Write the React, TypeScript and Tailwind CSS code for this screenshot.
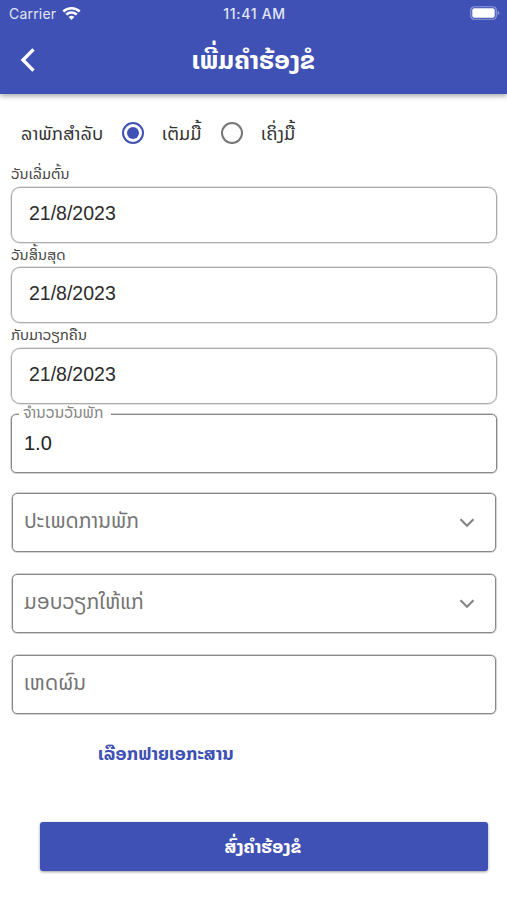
import { useState } from 'react';
import clsx from 'clsx';

const dateFields = [
  { label: 'ວັນເລີ່ມຕົ້ນ', value: '21/8/2023' },
  { label: 'ວັນສິ້ນສຸດ', value: '21/8/2023' },
  { label: 'ກັບມາວຽກຄືນ', value: '21/8/2023' },
];

function StatusBar() {
  return (
    <div className="grid h-[27px] grid-cols-3 items-center pl-[9px] pr-[7px] text-[14px] leading-none text-[#e3e6f7]">
      <div className="flex items-center gap-[6px]">
        <span className="tracking-[0.2px]">Carrier</span>
        <svg className="-mt-[1px]" width="19" height="15" viewBox="0 0 19 15" fill="none" stroke="#fff" strokeWidth="2.5">
          <path d="M1.3 5.5a11.8 11.8 0 0 1 16.4 0" />
          <path d="M4.3 8.7a7.5 7.5 0 0 1 10.4 0" />
          <path d="M9.5 14 6.6 11.1a4.2 4.2 0 0 1 5.8 0z" fill="#fff" stroke="none" />
        </svg>
      </div>
      <span className="text-center font-medium tracking-[0.7px]">11:41 AM</span>
      <svg className="-mt-[1px] justify-self-end" width="30" height="14" viewBox="0 0 30 14">
        <rect x="0.75" y="0.75" width="25.5" height="12.5" rx="3.5" fill="none" stroke="#919bd8" strokeWidth="1.2" />
        <rect x="2.3" y="2.3" width="22.4" height="9.4" rx="2" fill="#fff" />
        <path d="M27.6 4.8c2.3.7 2.3 3.7 0 4.4z" fill="#919bd8" />
      </svg>
    </div>
  );
}

function Header() {
  return (
    <header className="h-[94px] bg-[#3f51b5] shadow-[0_2px_5px_rgba(0,0,0,0.35)]">
      <StatusBar />
      <div className="grid h-[67px] grid-cols-[60px_1fr_60px] items-center">
        <button type="button" aria-label="Back" className="-mt-[2px] pl-[20px]">
          <svg width="16" height="24" viewBox="0 0 16 24" fill="none" stroke="#fff" strokeWidth="3.4">
            <path d="M13.5 1.4 3 12l10.5 10.6" />
          </svg>
        </button>
        <h1 className="-mt-[2px] text-center text-[25.6px] font-bold leading-none whitespace-nowrap text-white">
          ເພີ່ມຄຳຮ້ອງຂໍ
        </h1>
      </div>
    </header>
  );
}

function Radio({ checked, onClick, label }: { checked: boolean; onClick: () => void; label: string }) {
  return (
    <button
      type="button"
      role="radio"
      aria-checked={checked}
      aria-label={label}
      onClick={onClick}
      className={clsx(
        'flex size-[22px] shrink-0 items-center justify-center rounded-full border-2',
        checked ? 'border-[#3f51b5]' : 'border-[#777]',
      )}
    >
      {checked && <span className="size-[12px] rounded-full bg-[#3f51b5]" />}
    </button>
  );
}

function SelectField({ label, chevron = true }: { label: string; chevron?: boolean }) {
  return (
    <div className="mx-px flex h-[59px] items-center justify-between rounded-[5px] border border-[#888] pr-[20px] pb-[3px] pl-[11px] text-[20.8px] leading-none text-[#757575] shadow-[0_0_0_0.5px_#aaa]">
      <span className="whitespace-nowrap">{label}</span>
      {chevron && (
        <svg className="mt-[4px]" width="16" height="10" viewBox="0 0 16 10" fill="none" stroke="#858585" strokeWidth="2.2">
          <path d="M1.5 1.3 8 7.7l6.5-6.4" />
        </svg>
      )}
    </div>
  );
}

export default function App() {
  const [fullDay, setFullDay] = useState(true);

  return (
    <div className="h-[900px] w-[507px] overflow-hidden bg-white font-['Inter','Noto_Sans_Lao','DejaVu_Sans',sans-serif] text-[#333]">
      <Header />
      <main className="pr-[10px] pl-[11px]">
        <div className="mt-[21px] flex h-[36px] items-center pl-[10px] text-[18.3px] leading-none whitespace-nowrap">
          <span className="w-[101px]">ລາພັກສຳລັບ</span>
          <Radio checked={fullDay} onClick={() => setFullDay(true)} label="ເຕັມມື້" />
          <span className="w-[77px] pl-[18px]">ເຕັມມື້</span>
          <Radio checked={!fullDay} onClick={() => setFullDay(false)} label="ເຄິ່ງມື້" />
          <span className="pl-[18px]">ເຄິ່ງມື້</span>
        </div>

        <div className="mt-[11px]">
          {dateFields.map((f) => (
            <div key={f.label} className="h-[80.7px]">
              <div className="flex h-[24.5px] items-center text-[14.7px] leading-none whitespace-nowrap text-[#444]">
                {f.label}
              </div>
              <div className="flex h-[56px] items-center rounded-[9px] border border-[#aaa] pb-[2px] pl-[17px] font-['Liberation_Sans'] text-[19.5px] leading-none text-[#2c2c2c] shadow-[0_0_0_0.5px_#ccc]">
                {f.value}
              </div>
            </div>
          ))}
        </div>

        <div className="relative mt-[10px] flex h-[59px] items-center rounded-[5px] border border-[#888] pb-px pl-[12px] font-['Liberation_Sans'] text-[20px] leading-none text-[#222] shadow-[0_0_0_0.5px_#aaa]">
          <span className="absolute -top-[8px] left-[7px] flex h-[12px] w-[92px] items-center bg-white pl-[4px] font-['Noto_Sans_Lao','DejaVu_Sans',sans-serif] text-[15.4px] leading-none whitespace-nowrap text-[#858585]">
            ຈຳນວນວັນພັກ
          </span>
          1.0
        </div>

        <div className="mt-[20px] flex flex-col gap-[22px]">
          <SelectField label="ປະເພດການພັກ" />
          <SelectField label="ມອບວຽກໃຫ້ແກ່" />
          <SelectField label="ເຫດຜົນ" chevron={false} />
        </div>

        <button
          type="button"
          className="mt-[26px] ml-[87px] flex h-[26px] items-center text-[18.3px] font-bold leading-none whitespace-nowrap text-[#3f51b5]"
        >
          ເລືອກຟາຍເອກະສານ
        </button>
        <button
          type="button"
          className="mt-[56px] ml-[29px] flex h-[49px] w-[448px] items-center justify-center rounded-[3px] bg-[#3f51b5] pr-[2px] text-[18.3px] font-bold leading-none text-white shadow-[0_1px_3px_rgba(0,0,0,0.4)]"
        >
          ສົ່ງຄຳຮ້ອງຂໍ
        </button>
      </main>
    </div>
  );
}
